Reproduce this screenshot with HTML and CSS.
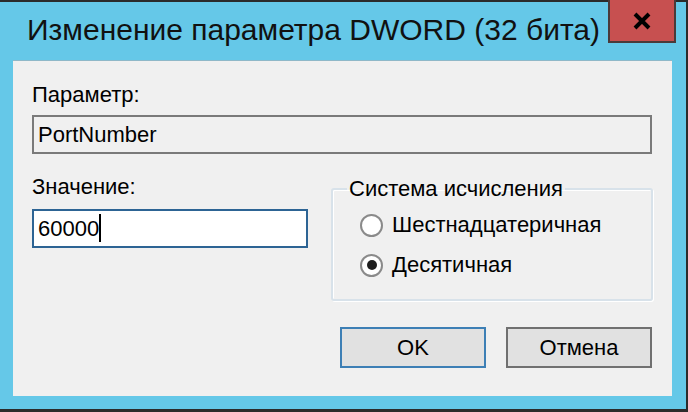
FILE: index.html
```html
<!DOCTYPE html>
<html lang="ru">
<head>
  <meta charset="UTF-8">
  <title>Изменение параметра DWORD (32 бита)</title>
  <link rel="stylesheet" href="styles.css">
</head>
<body>
  <div class="window">
    <div class="titlebar">
      <div class="title">Изменение параметра DWORD (32 бита)</div>
      <div class="close-btn">
        <svg width="20" height="18" viewBox="0 0 20 18">
          <path d="M3 2 L17 16 M17 2 L3 16" stroke="#000" stroke-width="4" fill="none"/>
        </svg>
      </div>
    </div>
    <div class="client">
      <div class="label">Параметр:</div>
      <div class="field readonly">PortNumber</div>

      <div class="middle">
        <div class="value-col">
          <div class="label">Значение:</div>
          <div class="field edit">60000<span class="caret"></span></div>
        </div>
        <fieldset class="group">
          <legend>Система исчисления</legend>
          <div class="radio"><span class="dot"></span>Шестнадцатеричная</div>
          <div class="radio"><span class="dot checked"></span>Десятичная</div>
        </fieldset>
      </div>

      <div class="buttons">
        <div class="btn default">OK</div>
        <div class="btn">Отмена</div>
      </div>
    </div>
  </div>
</body>
</html>
```

FILE: styles.css
```css
* { margin: 0; padding: 0; box-sizing: border-box; }
body {
  background: #2b2b2b;
  font-family: 'Liberation Sans', Arial, sans-serif;
  color: #000;
}
.window {
  width: 688px;
  height: 412px;
  background: #65c8e8;
  border-top: 2px solid #2b2b2b;
  border-right: 2px solid #2b2b2b;
  border-bottom: 3px solid #2b2b2b;
  display: flex;
  flex-direction: column;
}
.titlebar {
  height: 58px;
  display: flex;
  justify-content: space-between;
  align-items: flex-start;
}
.title {
  font-size: 30px;
  padding: 11px 0 0 27px;
  color: #111;
}
.close-btn {
  width: 68px;
  height: 43px;
  margin: -2px 10px 0 0;
  background: #c75050;
  border: 2px solid #4a3a3a;
  border-top: none;
  display: flex;
  justify-content: center;
  align-items: center;
}
.client {
  flex: 1;
  margin: 0 14px 13px 13px;
  background: #f0f0f0;
  border-top: 1px solid #8fb8c8;
  padding: 22px 20px 0 19px;
  font-size: 22px;
}
.label {
  height: 32px;
  line-height: 24px;
}
.field {
  height: 39px;
  border: 2px solid #7a7a7a;
  padding: 0 4px;
  line-height: 35px;
}
.field.readonly { background: #f0f0f0; }
.field.edit {
  background: #fff;
  border-color: #2d6494;
}
.caret {
  display: inline-block;
  width: 2px;
  height: 28px;
  background: #000;
  vertical-align: -6px;
}
.middle {
  display: grid;
  grid-template-columns: 276px 322px;
  column-gap: 23px;
  margin-top: 21px;
}
.value-col .label { height: 34px; }
.group {
  border: 2px solid #d8e2ea;
  box-shadow: inset 1px 1px 0 #fff, 1px 1px 0 #fff;
  border-radius: 3px;
  margin-top: 4px;
  height: 122px;
  padding: 6px 0 0 0;
}
.group legend {
  margin-left: 14px;
  padding: 0 2px;
  line-height: 20px;
}
.radio {
  display: flex;
  align-items: center;
  height: 40px;
  margin-left: 27px;
}
.dot {
  width: 23px;
  height: 23px;
  border-radius: 50%;
  border: 2px solid #8a8a8a;
  background: #fff;
  margin-right: 9px;
  display: flex;
  justify-content: center;
  align-items: center;
}
.dot.checked::after {
  content: "";
  width: 10px;
  height: 10px;
  border-radius: 50%;
  background: #1e1e1e;
}
.buttons {
  display: flex;
  justify-content: flex-end;
  gap: 20px;
  margin-top: 26px;
}
.btn {
  width: 146px;
  height: 41px;
  background: #e1e1e1;
  border: 2px solid #707070;
  text-align: center;
  line-height: 37px;
}
.btn.default { border-color: #3d7fb5; }
```
